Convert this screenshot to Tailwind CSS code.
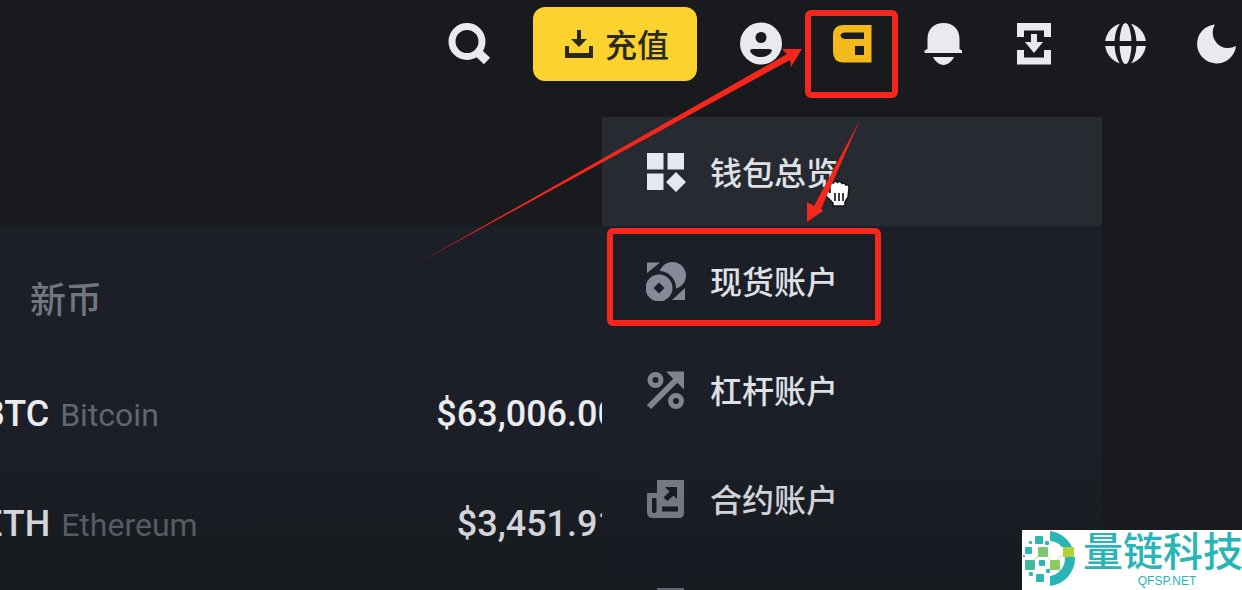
<!DOCTYPE html>
<html lang="zh-CN">
<head>
    <meta charset="UTF-8">
    <meta name="viewport" content="width=device-width, initial-scale=1.0">
    <title>钱包总览</title>
    <script src="https://cdn.jsdelivr.net/npm/@tailwindcss/browser@4"></script>
</head>
<body class="relative h-screen overflow-hidden bg-[#181a1e] font-['Roboto','Noto_Sans_CJK_SC',sans-serif] text-[#eaecef]">

    <!-- Top bar -->
    <header class="flex h-22 items-center justify-end gap-[42px] pr-1">
        <button aria-label="搜索" class="size-11">
            <svg viewBox="0 0 44 44" fill="none" stroke="#e9eaef">
                <circle cx="20" cy="19.5" r="15" stroke-width="7"/>
                <path d="M31 30.5L40 39" stroke-width="9"/>
            </svg>
        </button>
        <button class="flex h-[74px] w-[164px] items-center justify-center gap-3 rounded-xl bg-[#fcd22f] pl-1 text-[32px] font-medium text-[#2a2a1c]">
            <svg class="size-7" viewBox="0 0 28 28" fill="#2a2a1c">
                <path d="M12 0h4v9h6l-8 8-8-8h6z"/>
                <path d="M0 16h4v7h20v-7h4v12H0z"/>
            </svg>
            <span class="pt-1">充值</span>
        </button>
        <nav class="flex gap-[47px]">
            <button aria-label="用户" class="size-11">
                <svg viewBox="0 0 44 44">
                    <circle cx="22" cy="21.5" r="21" fill="#e9eaef"/>
                    <circle cx="22" cy="15.5" r="5.5" fill="#181a1e"/>
                    <path d="M11 29q0-2 3-2h16q3 0 3 2c-2 4-6 6-11 6s-9-2-11-6z" fill="#181a1e"/>
                </svg>
            </button>
            <button aria-label="钱包" class="size-11">
                <svg viewBox="0 0 44 44">
                    <path d="M13 3H41.500V40.500H13Q3 40 3 30V13Q3 3.500 13 3z" fill="#f3b81a"/>
                    <path d="M15 10.500H34V17H15Q11 16.500 10.500 13.500Q11 10.500 15 10.500z" fill="#181a1e"/>
                    <path d="M25 24h9v9h-9z" fill="#181a1e"/>
                </svg>
            </button>
            <button aria-label="通知" class="size-11">
                <svg viewBox="0 0 44 44" fill="#e9eaef">
                    <path d="M6.500 27V17C6.500 7 13 1 22.500 1S38.500 7 38.500 17V27L41 28.500V31H3.500V28.500z"/>
                    <path d="M12 35h21c-2 4-6 8-10.500 8S14 39 12 35z"/>
                </svg>
            </button>
            <button aria-label="下载" class="size-11">
                <svg viewBox="0 0 44 44" fill="#e9eaef">
                    <path d="M5 1H39V15H32V8.500H12V15H5z"/>
                    <path d="M5 28H12V35.500H32V28H39V42.500H5z"/>
                    <path d="M19 12h6v8h6l-9 11-9-11h6z"/>
                </svg>
            </button>
            <button aria-label="语言" class="size-11">
                <svg viewBox="0 0 44 44">
                    <circle cx="22.500" cy="21.500" r="20.500" fill="#e9eaef"/>
                    <ellipse cx="22.500" cy="21.500" rx="11" ry="23" fill="#181a1e"/>
                    <ellipse cx="22.500" cy="21.500" rx="6" ry="20.500" fill="#e9eaef"/>
                    <path d="M0 19h44v5H0z" fill="#181a1e"/>
                </svg>
            </button>
            <button aria-label="夜间模式" class="size-11">
                <svg viewBox="0 0 44 44" fill="#e9eaef">
                    <path d="M21 2.500A19.500 19.500 0 1 0 42 24A15.500 15.500 0 0 1 21 2.500z"/>
                </svg>
            </button>
        </nav>
    </header>

    <!-- Market list -->
    <main class="mt-[138px] mr-[624px] bg-linear-to-b from-[#1c1f27] from-50% to-[#16191c]">
        <div class="flex h-[133px] items-center pt-4 pl-[30px]">
            <a href="#" class="text-[36px] leading-none font-medium text-[#72767f]">新币</a>
        </div>
        <table class="-ml-[18px] w-[calc(100%+18px)] text-[36px] font-medium">
            <tbody>
                <tr class="h-[110px]">
                    <td>BTC <span class="ml-0.5 text-[32px] font-normal text-[#62666f]">Bitcoin</span></td>
                    <td class="text-right">$63,006.00</td>
                </tr>
                <tr class="h-[110px] text-[#d3d5da]">
                    <td>ETH <span class="ml-0.5 text-[32px] font-normal text-[#575b63]">Ethereum</span></td>
                    <td class="text-right">$3,451.91</td>
                </tr>
            </tbody>
        </table>
        <div class="h-11"></div>
    </main>

    <!-- Wallet dropdown -->
    <div class="absolute top-[117px] right-[140px] w-[500px] bg-linear-to-b from-[#1c1f27] from-60% to-[#16191e] to-90% text-[32px] font-medium text-[#dfe1e6]">
        <a href="#" class="flex h-[109px] items-center gap-6 bg-[#272a30] pl-11">
            <svg class="size-10" viewBox="0 0 40 40" fill="#e6e8f0">
                <path d="M1 1h16.500v16.500H1zM21.500 1H38v16.500H21.500zM1 21.500h16.500V38H1zM30 20l10 10-10 10-10-10z"/>
            </svg>
            <span class="pt-1">钱包总览</span>
        </a>
        <a href="#" class="flex h-[109px] items-center gap-6 pl-11">
            <svg class="size-10" viewBox="0 0 40 40" fill="#858a99">
                <path d="M1 1.500H14L1 12z"/>
                <path d="M39 27V39H26z"/>
                <circle cx="26.500" cy="14.500" r="13.500"/>
                <circle cx="13" cy="27" r="17" fill="#1c1f27"/>
                <circle cx="13" cy="27" r="13.500"/>
                <path d="M13 21.500l5.500 5.500-5.500 5.500L7.500 27z" fill="#1c1f27"/>
            </svg>
            <span class="pt-1">现货账户</span>
        </a>
        <a href="#" class="flex h-[109px] items-center gap-6 pl-11">
            <svg class="size-10" viewBox="0 0 40 40" fill="none" stroke="#7f858f">
                <circle cx="9.500" cy="10" r="5.500" stroke-width="5"/>
                <circle cx="30" cy="31" r="5.500" stroke-width="5"/>
                <path d="M3 37L31 9" stroke-width="6"/>
                <path d="M20 1.500H38V19.500z" fill="#7f858f" stroke="none"/>
            </svg>
            <span class="pt-1">杠杆账户</span>
        </a>
        <a href="#" class="flex h-[109px] items-center gap-6 pl-11 text-[#d0d2d8]">
            <svg class="size-10" viewBox="0 0 40 40">
                <path d="M11 1H38V34Q38 39 33 39H7Q1 39 1 33V14H11z" fill="#737981"/>
                <path d="M6 19H10.500V33Q8 35 6 33zM16 27.500H32V32.500H16zM19 8H31V20L27.500 16.500L21.500 22L17.500 18.500L23.500 12.500z" fill="#181b20"/>
            </svg>
            <span class="pt-1">合约账户</span>
        </a>
        <a href="#" aria-label="更多" class="flex h-[109px] items-center pl-11">
            <svg class="size-10" viewBox="0 0 40 40" fill="#60656d">
                <path d="M11 0H38V38H11z"/>
            </svg>
        </a>
    </div>

    <!-- Hand cursor -->
    <svg class="absolute top-[179px] right-[390px] h-[30px] w-[30px]" viewBox="0 0 30 30">
        <path d="M2 13Q3 10 7 12L8 14V6Q9 3 11.500 4Q13 1 15.500 3.500Q18 1 20 4.500Q23 3 23.500 6Q27 5 27 9L26 18L23 23V27H11V24L4 17z" fill="#fff" stroke="#111316" stroke-width="1.500"/>
        <path d="M13 14v8M17 14v8M21 14v8" stroke="#3b3d41" stroke-width="2"/>
    </svg>

    <!-- Red annotations -->
    <svg class="pointer-events-none absolute top-0 right-0 h-[590px] w-[1242px] max-w-none" viewBox="0 0 1242 590">
        <g fill="none" stroke="#f5261b" stroke-width="6">
            <rect x="808" y="13" width="87" height="82" rx="3"/>
            <rect x="610" y="231" width="268" height="92" rx="3"/>
        </g>
        <g fill="#f5261b">
            <path d="M420 262L787 54L782 49H802L791 67L790 60z"/>
            <path d="M860 120L814 206L807 202V222L823 211L821 209z"/>
        </g>
    </svg>

    <!-- Watermark -->
    <div class="absolute right-0 bottom-0 flex h-[60px] w-[220px] items-center gap-[7px] overflow-hidden bg-white text-[#27b5b8]">
        <svg class="h-[60px] w-[54px] shrink-0" viewBox="0 0 54 60">
            <path d="M28 1A28 28 0 0 1 50 17H40A17 17 0 0 0 28 11zM53 27A28 28 0 0 1 28 56V46A18 18 0 0 0 43 27z" fill="#27b5b8"/>
            <path d="M28 36L41 25M16 26L10 32M26 27l5 6" stroke="#b9dfb0"/>
            <g fill="#2cb6b4">
                <rect x="13" y="6" width="8" height="8" rx="1"/>
                <rect x="3" y="17" width="7" height="7" rx="1"/>
                <rect x="17" y="30" width="6" height="6" rx="1"/>
                <rect x="14" y="44" width="8" height="8" rx="1"/>
                <rect x="7" y="11" width="3" height="3" rx="1"/>
                <rect x="23" y="11" width="4" height="4" rx="1"/>
                <rect x="1" y="25" width="2" height="2"/>
                <rect x="7" y="42" width="4" height="4" rx="1"/>
                <rect x="24" y="39" width="4" height="4" rx="1"/>
            </g>
            <rect x="16" y="17" width="10" height="10" rx="1" fill="#7ec573"/>
            <rect x="3" y="30" width="10" height="10" rx="1" fill="#45b99c"/>
            <rect x="28" y="30" width="10" height="10" rx="1" fill="#8dcb5c"/>
            <rect x="41" y="17" width="11" height="10" rx="1" fill="#b5d334"/>
        </svg>
        <div class="flex shrink-0 flex-col items-center whitespace-nowrap">
            <span class="text-[40px] leading-[42px] font-medium">量链科技</span>
            <span class="pl-2 font-['Liberation_Sans',sans-serif] text-[12px] leading-[14px]">QFSP.NET</span>
        </div>
    </div>
</body>
</html>
